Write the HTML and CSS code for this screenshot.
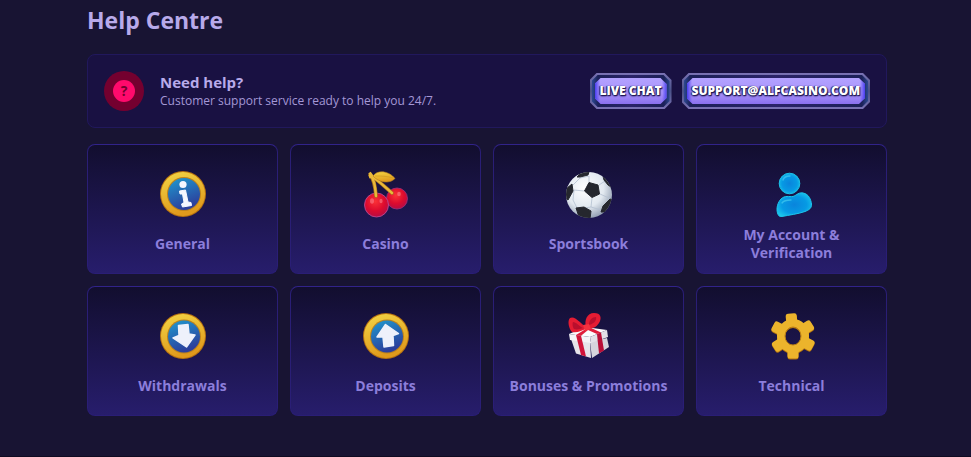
FILE: index.html
```html
<!DOCTYPE html>
<html lang="en">
<head>
    <meta charset="UTF-8">
    <meta name="viewport" content="width=device-width, initial-scale=1.0">
    <title>Help Centre</title>
    <link rel="stylesheet" href="styles.css">
</head>
<body>

    <!-- Shared gradients -->
    <svg class="defs" width="0" height="0" aria-hidden="true">
        <defs>
            <linearGradient id="gold" x1="0" y1="0" x2="0.3" y2="1">
                <stop offset="0" stop-color="#f3d545"/>
                <stop offset="1" stop-color="#e09a1c"/>
            </linearGradient>
            <linearGradient id="blue" x1="0" y1="0" x2="0.4" y2="1">
                <stop offset="0" stop-color="#1f9bd0"/>
                <stop offset="1" stop-color="#2c3f9c"/>
            </linearGradient>
            <radialGradient id="cherry" cx="0.45" cy="0.35" r="0.65">
                <stop offset="0" stop-color="#fb3136"/>
                <stop offset="0.6" stop-color="#dd0b2e"/>
                <stop offset="1" stop-color="#b60c44"/>
            </radialGradient>
            <radialGradient id="ball" cx="0.4" cy="0.35" r="0.7">
                <stop offset="0" stop-color="#ffffff"/>
                <stop offset="0.6" stop-color="#e2e9f0"/>
                <stop offset="1" stop-color="#8c99ad"/>
            </radialGradient>
            <radialGradient id="user" cx="0.5" cy="0.5" r="0.6">
                <stop offset="0" stop-color="#0a84dc"/>
                <stop offset="0.6" stop-color="#069ae4"/>
                <stop offset="1" stop-color="#1cc8ec"/>
            </radialGradient>
            <clipPath id="ballClip"><circle cx="24" cy="25" r="23"/></clipPath>
            <g id="gear">
                <ellipse cx="25" cy="24" rx="12" ry="13" fill="none" stroke="currentColor" stroke-width="8"/>
                <g fill="currentColor">
                    <rect x="19.500" y="1.500" width="11" height="12" rx="2.500" transform="rotate(-5 25 24)"/>
                    <rect x="19.500" y="1.500" width="11" height="12" rx="2.500" transform="rotate(58 25 24)"/>
                    <rect x="19.500" y="1.500" width="11" height="12" rx="2.500" transform="rotate(118 25 24)"/>
                    <rect x="19.500" y="1.500" width="11" height="12" rx="2.500" transform="rotate(180 25 24)"/>
                    <rect x="19.500" y="1.500" width="11" height="12" rx="2.500" transform="rotate(238 25 24)"/>
                    <rect x="19.500" y="1.500" width="11" height="12" rx="2.500" transform="rotate(298 25 24)"/>
                </g>
            </g>
        </defs>
    </svg>

    <main class="container">
        <h1>Help Centre</h1>

        <section class="support">
            <div class="support-icon"><span>?</span></div>
            <div class="support-text">
                <h2>Need help?</h2>
                <p>Customer support service ready to help you 24/7.</p>
            </div>
            <div class="support-actions">
                <button type="button" class="btn"><span>LIVE CHAT</span></button>
                <a class="btn" href="mailto:support@alfcasino.com"><span>SUPPORT@ALFCASINO.COM</span></a>
            </div>
        </section>

        <nav class="topics" aria-label="Help topics">
            <a class="card" href="#general">
                <svg viewBox="0 0 48 48" aria-hidden="true">
                    <circle cx="24" cy="24" r="23" fill="#b8720f"/>
                    <circle cx="24" cy="24" r="22" fill="url(#gold)"/>
                    <circle cx="25" cy="24" r="17" fill="#bd821c"/>
                    <circle cx="25" cy="24" r="16" fill="url(#blue)"/>
                    <circle cx="24" cy="14.5" r="3.6" fill="#f4f6ff"/>
                    <path d="M20.500 21L26.500 20L29 32L32 32.500L32.500 35.500L23.500 37L22.500 34L25 32.500L23.500 24L21 24Z" fill="#f4f6ff" stroke="#f4f6ff" stroke-linejoin="round"/>
                </svg>
                <span>General</span>
            </a>
            <a class="card" href="#casino">
                <svg viewBox="0 0 48 48" aria-hidden="true">
                    <circle cx="35" cy="28.500" r="10.500" fill="url(#cherry)" stroke="#a3307a" stroke-width="0.800"/>
                    <circle cx="14.500" cy="35" r="12" fill="url(#cherry)" stroke="#c0509a" stroke-width="0.800"/>
                    <path d="M8 5C12 9 13 15 14 26M9 6C16 10 23 17 30 23" fill="none" stroke="#a8711b" stroke-width="3.600" stroke-linecap="round"/>
                    <path d="M8 5C12 9 13 15 14 26M9 6C16 10 23 17 30 23" fill="none" stroke="#e9b93a" stroke-width="2.400" stroke-linecap="round"/>
                    <path d="M7.500 2.500L10 6L7 7" fill="none" stroke="#e9b93a" stroke-width="3" stroke-linejoin="round"/>
                    <path d="M11 6C15 0 26 0 33 8.500C28 14 17 13 11 6Z" fill="url(#gold)" stroke="#b8801d" stroke-width="0.600"/>
                    <path d="M13 6C19 6 25 6 31 8" fill="none" stroke="#c8961f" stroke-width="0.600"/>
                    <ellipse cx="10" cy="31" rx="2" ry="2.800" fill="#ff8f9c" opacity="0.500"/>
                    <ellipse cx="19" cy="31" rx="1.600" ry="2.200" fill="#ff8f9c" opacity="0.500"/>
                    <ellipse cx="37" cy="24" rx="1.800" ry="2.200" fill="#ff9c9c" opacity="0.500"/>
                </svg>
                <span>Casino</span>
            </a>
            <a class="card" href="#sportsbook">
                <svg viewBox="0 0 48 48" aria-hidden="true">
                    <circle cx="24" cy="25" r="23" fill="url(#ball)"/>
                    <g clip-path="url(#ballClip)">
                        <path d="M24 12L24 6M34 15L40 11M35 24L44 28M27 28L26 37M19 21L9 20M40 11L44 15M24 6L15 8L8 15M9 20L8 30L12 38M26 37L19 38M26 37L36 40L42 33L44 28" fill="none" stroke="#b4c0d0" stroke-width="0.800"/>
                        <g fill="#25272e" stroke="#25272e" stroke-linejoin="round">
                            <path d="M24 12.500L33 15L34.500 24L27 27.500L19.500 21Z"/>
                            <path d="M12 7L17 2L24 2L23 5L15 7Z"/>
                            <path d="M38 6L43 10L46 17L43 15L39 10Z"/>
                            <path d="M2 18L7 14L8 21L3 30L0 28Z"/>
                            <path d="M11 38L19 37L26 41L25 49L14 47Z"/>
                            <path d="M45 29L48 30L42 42L36 42L38 36Z"/>
                        </g>
                    </g>
                </svg>
                <span>Sportsbook</span>
            </a>
            <a class="card" href="#account">
                <svg viewBox="0 0 48 48" aria-hidden="true">
                    <g fill="url(#user)" stroke="#1cc4ea" stroke-width="1">
                        <circle cx="21.500" cy="13.500" r="10.300"/>
                        <path d="M9.500 43C8 38 10 32 13 29C17 25 21 27 25 26.500C29 25 31 22 35 23C41 24 43 30 43.500 34C44 38 41 40 37 41.500C30 44 21 45 14 46.500C11 47 10 45 9.500 43Z"/>
                    </g>
                    <path d="M15 10C16 7 19 6 22 6M14 33C16 30 20 30 23 30" fill="none" stroke="#5be0f5" stroke-width="1.400" stroke-linecap="round" opacity="0.500"/>
                </svg>
                <span>My Account &amp; Verification</span>
            </a>
            <a class="card" href="#withdrawals">
                <svg viewBox="0 0 48 48" aria-hidden="true">
                    <circle cx="24" cy="24" r="23" fill="#b8720f"/>
                    <circle cx="24" cy="24" r="22" fill="url(#gold)"/>
                    <circle cx="25" cy="24.500" r="17" fill="#bd821c"/>
                    <circle cx="25" cy="24.500" r="16" fill="url(#blue)"/>
                    <path d="M19.500 13.500L29 12.500L30 22L36 23L27.500 35L14 26L20 23.500Z" fill="#eef1fb" stroke="#eef1fb" stroke-width="1.500" stroke-linejoin="round"/>
                </svg>
                <span>Withdrawals</span>
            </a>
            <a class="card" href="#deposits">
                <svg viewBox="0 0 48 48" aria-hidden="true">
                    <circle cx="24" cy="24" r="23" fill="#b8720f"/>
                    <circle cx="24" cy="24" r="22" fill="url(#gold)"/>
                    <circle cx="25" cy="24.500" r="17" fill="#bd821c"/>
                    <circle cx="25" cy="24.500" r="16" fill="url(#blue)"/>
                    <path d="M23.500 12.500L36.500 21.500L31 23.500L31.500 33.500L22 35L21 25L15 25Z" fill="#eef1fb" stroke="#eef1fb" stroke-width="1.500" stroke-linejoin="round"/>
                </svg>
                <span>Deposits</span>
            </a>
            <a class="card" href="#bonuses">
                <svg viewBox="0 0 48 48" aria-hidden="true">
                    <path d="M6 27L25 30L26 46L11 41.500Z" fill="#e6e4ea"/>
                    <path d="M25 30L42 26L44 35L27 46Z" fill="#d6d4dc"/>
                    <path d="M4 22L20 15L42 18L25 25Z" fill="#fbfafc"/>
                    <path d="M4 22L25 25L26 31L5 28Z" fill="#f5f3f7"/>
                    <path d="M25 25L42 18L43 25L26 31Z" fill="#e2e0e7"/>
                    <path d="M11 23L16 23.700L21 44.500L16 43Z" fill="#d0143a"/>
                    <path d="M32 22L36 20.500L39 38.500L34 41.500Z" fill="#b80f38"/>
                    <path d="M11 23L24 15L36 20.500L32 22L23 18L16 23.700Z" fill="#df1b3a"/>
                    <path d="M22 16C17 13 10 3 5 6C2 9 4 17 7 20C12 21 17 19 22 16Z" fill="#e41c33"/>
                    <path d="M18 16C14 14 11 10 8 10C7 12 8 16 9 17C12 18 15 17 18 16Z" fill="#b90f2d"/>
                    <path d="M21 16C19 8 22 1 29 1C36 1 37 6 34 11C31 16 26 17 21 16Z" fill="#e41c33"/>
                    <path d="M24 13C24 8 27 5 31 5C32 9 28 12 24 13Z" fill="#b90f2d"/>
                    <path d="M18 13L24 12L26 17L20 19Z" fill="#f5313f"/>
                </svg>
                <span>Bonuses &amp; Promotions</span>
            </a>
            <a class="card" href="#technical">
                <svg viewBox="0 0 48 48" aria-hidden="true">
                    <use href="#gear" y="1" color="#b0700f"/>
                    <use href="#gear" color="#ecb42c"/>
                    <ellipse cx="25" cy="24" rx="8" ry="9" fill="none" stroke="#b97d15"/>
                </svg>
                <span>Technical</span>
            </a>
        </nav>
    </main>

    <footer class="footer"></footer>

</body>
</html>
```
FILE: styles.css
```css
* {
    box-sizing: border-box;
}
body {
    margin: 0;
    padding-left: 3px;
    font-family: "Open Sans", "Noto Sans", sans-serif;
    background-color: #181433;
    color: #b8aaea;
}
.defs {
    position: absolute;
}
.container {
    max-width: 800px;
    margin: 0 auto;
    padding-bottom: 40px;
}
h1, h2, p {
    margin: 0;
}
h1 {
    padding: 4px 0 18px;
    font-size: 23px;
    line-height: 32px;
}

/* Support banner */
.support {
    display: flex;
    align-items: center;
    gap: 16px;
    padding: 16px;
    border: 1px solid #21185c;
    border-radius: 8px;
    background-color: #191142;
}
.support-icon {
    display: flex;
    align-items: center;
    justify-content: center;
    width: 40px;
    height: 40px;
    border-radius: 50%;
    background-color: #74002f;
}
.support-icon span {
    width: 22px;
    border-radius: 50%;
    background-color: #ff0a6c;
    color: #74002f;
    font-size: 14px;
    font-weight: bold;
    line-height: 22px;
    text-align: center;
}
.support-text {
    flex: 1;
}
.support-text h2 {
    font-size: 15px;
    line-height: 20px;
}
.support-text p {
    font-size: 12px;
    line-height: 18px;
    color: #a497d6;
}
.support-actions {
    display: flex;
    gap: 10px;
}

/* Buttons with cut corners, three layers deep */
.btn {
    position: relative;
    z-index: 0;
    height: 36px;
    padding: 0 10px;
    border: 0;
    background: linear-gradient(#7a72b4, #4a5288 50%, #7a72b4);
    clip-path: polygon(7px 0, calc(100% - 7px) 0, 100% 7px, 100% calc(100% - 7px), calc(100% - 7px) 100%, 7px 100%, 0 calc(100% - 7px), 0 7px);
    color: #fff;
    font-family: inherit;
    font-size: 12px;
    font-weight: 800;
    line-height: 36px;
    text-decoration: none;
    text-shadow: 1px 1px 1px #1c1550, -1px 0 1px #1c1550, 0 1px 2px #1c1550;
    cursor: pointer;
}
.btn::before,
.btn::after {
    content: "";
    position: absolute;
    z-index: -1;
    clip-path: polygon(6px 0, calc(100% - 6px) 0, 100% 6px, 100% calc(100% - 6px), calc(100% - 6px) 100%, 6px 100%, 0 calc(100% - 6px), 0 6px);
}
.btn::before {
    inset: 2px;
    background: linear-gradient(90deg, #2c4a92, #1b2058 6px, #2a2368 50%, #1b2058 calc(100% - 6px), #2c4a92);
}
.btn::after {
    inset: 5px;
    background: linear-gradient(90deg, #4a3ef0, transparent 5px, transparent calc(100% - 5px), #4a3ef0), linear-gradient(#b3a2ff, #a892fb 60%, #8a70ee);
}
.btn:hover::after {
    filter: brightness(1.1);
}

/* Topic cards */
.topics {
    display: grid;
    grid-template-columns: repeat(4, 1fr);
    gap: 12px;
    margin-top: 16px;
}
.card {
    display: flex;
    flex-direction: column;
    align-items: center;
    gap: 8px;
    padding: 25px 12px 11px;
    border: 1px solid #2a1e76;
    border-top-color: #31238a;
    border-radius: 8px;
    background: linear-gradient(#120e2f, #271d6c);
    color: #8c7edb;
    text-decoration: none;
}
.card:hover {
    border-color: #4a38b8;
}
.card svg {
    width: 48px;
    height: 48px;
}
.card span {
    display: flex;
    align-items: center;
    min-height: 36px;
    max-width: 160px;
    font-size: 14px;
    font-weight: bold;
    line-height: 18px;
    text-align: center;
}
.footer {
    margin-left: -3px;
    border-top: 1px solid #0f0b22;
}

@media (max-width: 820px) {
    .container {
        padding: 0 12px 40px;
    }
    .support {
        flex-wrap: wrap;
    }
    .topics {
        grid-template-columns: repeat(2, 1fr);
    }
}
```
